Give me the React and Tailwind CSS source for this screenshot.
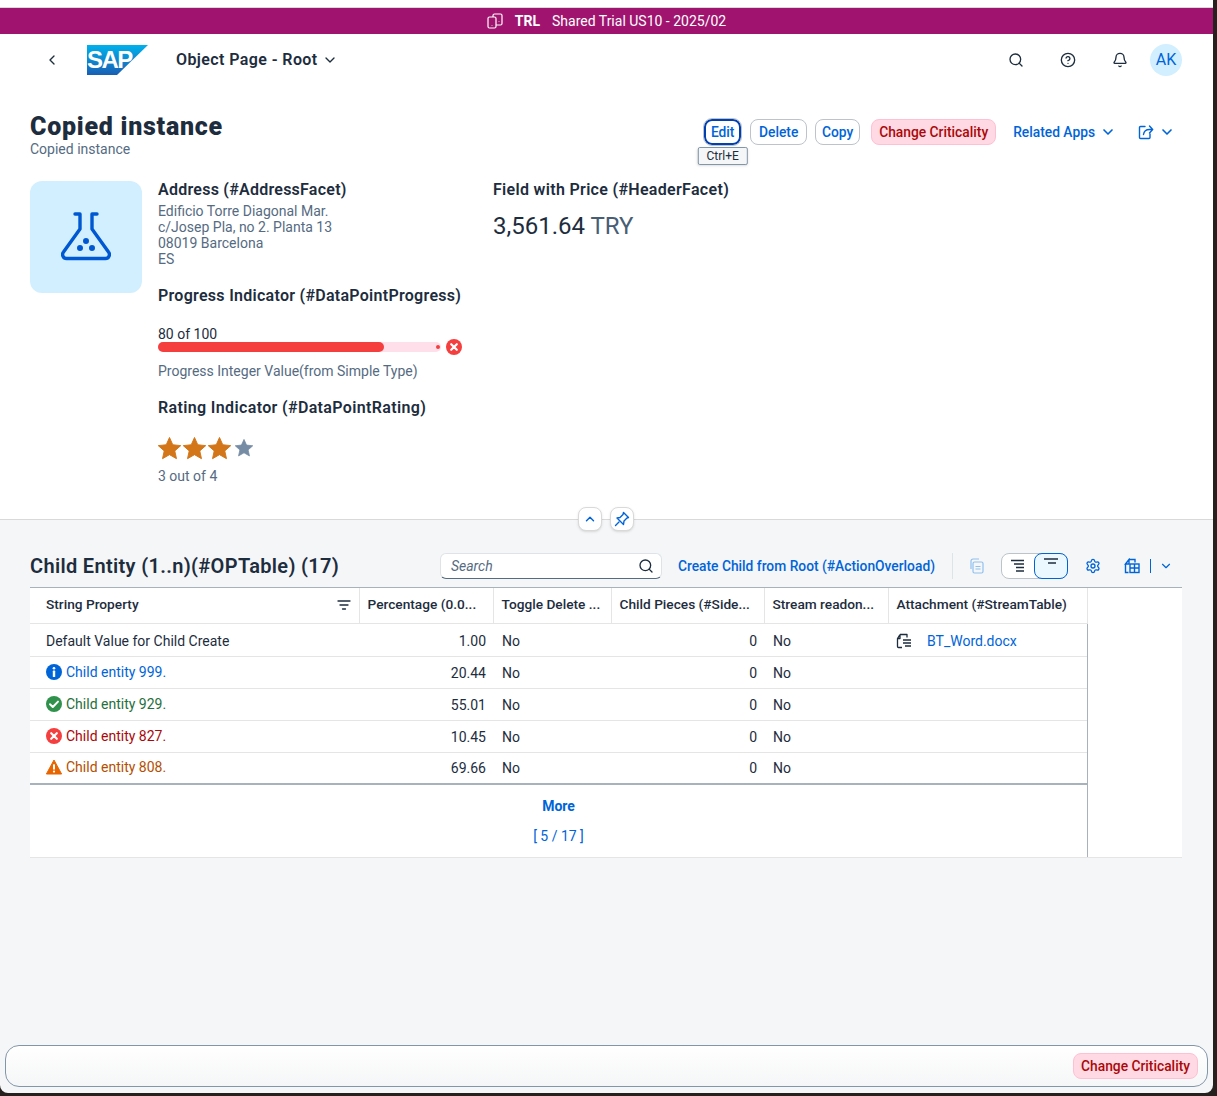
import { ChevronDown, ChevronLeft, ChevronUp, Search, CircleHelp, Bell, Settings } from 'lucide-react'

const columns = [
  { label: 'String Property', width: 'w-[329px]', filter: true },
  { label: 'Percentage (0.0...', width: 'w-[134px]' },
  { label: 'Toggle Delete ...', width: 'w-[118px]' },
  { label: 'Child Pieces (#Side...', width: 'w-[153px]' },
  { label: 'Stream readon...', width: 'w-[124px]' },
  { label: 'Attachment (#StreamTable)', width: 'w-[199px]' }
]

const rows = [
  { name: 'Default Value for Child Create', pct: '1.00', h: 'h-[33px]', color: 'text-[#1d2d3e]', cell: 'pt-[2px]', attachment: true },
  { name: 'Child entity 999.', pct: '20.44', h: 'h-[32px]', color: 'text-[#0064d9]', cell: 'pt-[2px]', status: 'info' },
  { name: 'Child entity 929.', pct: '55.01', h: 'h-[32px]', color: 'text-[#256f3a]', cell: 'pt-[2px]', status: 'success' },
  { name: 'Child entity 827.', pct: '10.45', h: 'h-[32px]', color: 'text-[#aa0808]', cell: 'pt-[2px]', status: 'error' },
  { name: 'Child entity 808.', pct: '69.66', h: 'h-[32px]', color: 'text-[#b44f00]', cell: 'pt-0', status: 'warning' }
]

function StatusIcon({ type, size = 16 }) {
  if (type === 'info') {
    return (
      <svg width={size} height={size} viewBox="0 0 16 16">
        <circle cx="8" cy="8" r="8" fill="#0064d9" />
        <circle cx="8" cy="4.2" r="1.3" fill="#fff" />
        <rect x="6.8" y="6.6" width="2.4" height="6.4" rx="0.6" fill="#fff" />
      </svg>
    )
  }
  if (type === 'success') {
    return (
      <svg width={size} height={size} viewBox="0 0 16 16">
        <circle cx="8" cy="8" r="8" fill="#30914c" />
        <path d="M4 8.3l2.8 2.7L12 5.6" fill="none" stroke="#fff" strokeWidth="2" strokeLinecap="round" strokeLinejoin="round" />
      </svg>
    )
  }
  if (type === 'error') {
    return (
      <svg width={size} height={size} viewBox="0 0 16 16">
        <circle cx="8" cy="8" r="8" fill="#f53e3e" />
        <path d="M5.2 5.2l5.6 5.6M10.8 5.2l-5.6 5.6" fill="none" stroke="#fff" strokeWidth="2.2" strokeLinecap="round" />
      </svg>
    )
  }
  return (
    <svg width={size} height={size} viewBox="0 0 16 16">
      <path d="M8 1L15.6 15H0.4z" fill="#e76500" stroke="#e76500" strokeLinejoin="round" />
      <rect x="7" y="5.2" width="2" height="5.4" rx="0.5" fill="#fff" />
      <circle cx="8" cy="12.6" r="1.1" fill="#fff" />
    </svg>
  )
}

function Star({ size, color, className = '' }) {
  return (
    <svg width={size} height={size} viewBox="0 0 24 24" className={className}>
      <path d="M12 .5l3.400 7.600 8.300.9-6.200 5.500 1.800 8.100-7.300-4.200-7.300 4.200 1.800-8.100L.3 9l8.300-.9z" fill={color} stroke={color} strokeLinejoin="round" />
    </svg>
  )
}

function Button({ children, className = '' }) {
  return (
    <button className={`h-[26px] rounded-lg border border-[#bcc3ca] bg-white text-[#0064d9] text-[13.8px] font-medium ${className}`}>
      {children}
    </button>
  )
}

function ChangeCriticality({ className = '' }) {
  return (
    <button className={`h-[26px] px-[7px] rounded-lg border border-[#ffc0d4] bg-[#ffd9e4] text-[#aa0808] text-[13.8px] font-medium ${className}`}>
      Change Criticality
    </button>
  )
}

function ShareIcon() {
  return (
    <svg width="16" height="16" viewBox="0 0 16 16" fill="none" stroke="#0064d9" strokeWidth="1.4" strokeLinecap="round" strokeLinejoin="round">
      <path d="M7 2.500H2.500a1 1 0 0 0-1 1v10a1 1 0 0 0 1 1h8.500a1 1 0 0 0 1-1V10" />
      <path d="M5.500 10.500c.4-3 2.600-5 6-5h3M11.500 2l3.200 3.500-3.200 3.500" />
    </svg>
  )
}

function PinIcon() {
  return (
    <svg width="16" height="16" viewBox="0 0 16 16" fill="none" stroke="#0064d9" strokeWidth="1.4" strokeLinecap="round" strokeLinejoin="round">
      <path d="M9.500 1.500l5 5-1.500.5-3 3 -.5 3.500-6.500-6.500L6 6.500l3-3z" />
      <path d="M5 11l-3.500 3.500" />
    </svg>
  )
}

function TableHeaderRows() {
  return (
    <thead>
      <tr className="h-[35px] border-b border-[#e5e5e5]">
        {columns.map((col, i) => (
          <th
            key={col.label}
            className={`${col.width} border-r border-[#e5e5e5] text-left text-[13.7px] font-medium text-[#1d2d3e] whitespace-nowrap ${i === 0 ? 'pl-4 pr-2' : 'pl-2 pr-1'} ${i === 5 ? 'border-[#a8b2bd]' : ''}`}
          >
            {col.filter ? (
              <div className="flex items-center justify-between">
                <span>{col.label}</span>
                <svg width="14" height="12" viewBox="0 0 14 12" fill="none" stroke="#1d2d3e" strokeWidth="1.3" strokeLinecap="round">
                  <path d="M1 2h12M3 6h8M5.500 10h3" />
                </svg>
              </div>
            ) : col.label}
          </th>
        ))}
      </tr>
    </thead>
  )
}

export default function App() {
  return (
    <div className="w-[1217px] h-[1096px] bg-[#26211f] overflow-hidden" style={{ fontFamily: 'Roboto, Arial, sans-serif' }}>
      <div className="w-[1213px] h-[1093px] bg-[#f5f6f7] rounded-b-lg flex flex-col overflow-hidden">
        <div className="h-[8px] shrink-0 bg-white border-b border-[#d9d9d9]"></div>

        {/* Trial banner */}
        <div className="h-[26px] shrink-0 bg-[#a0146f] text-white text-sm flex items-center justify-center gap-3">
          <svg width="16" height="16" viewBox="0 0 16 16" fill="none" stroke="#fff" strokeWidth="1.2" strokeLinejoin="round">
            <rect x="1" y="4" width="8" height="11" rx="1.500" />
            <path d="M6 4V2.500A1.500 1.500 0 0 1 7.500 1h6A1.500 1.500 0 0 1 15 2.500v8a1.500 1.500 0 0 1-1.500 1.500H9" />
            <path d="M5 12v.5M12 8v.5" />
          </svg>
          <span className="font-bold">TRL</span>
          <span>Shared Trial US10 - 2025/02</span>
        </div>

        {/* Shell bar */}
        <div className="h-[52px] shrink-0 bg-white flex items-center pl-[44px] pr-[31px]">
          <ChevronLeft size={16} strokeWidth={2} className="text-[#1d2d3e]" />
          <svg width="61" height="30" viewBox="0 0 61 30" className="ml-[27px]">
            <defs>
              <linearGradient id="sapBlue" x1="0" y1="0" x2="0" y2="1">
                <stop offset="0" stopColor="#00b1eb" />
                <stop offset="1" stopColor="#1a5fb4" />
              </linearGradient>
            </defs>
            <polygon points="0,0 61,0 30,30 0,30" fill="url(#sapBlue)" />
            <text x="0" y="23" fontSize="24" fontWeight="700" fill="#fff" fontFamily="Liberation Sans" letterSpacing="-1.500">SAP</text>
          </svg>
          <span className="ml-[28px] text-base font-semibold tracking-[0.4px] text-[#1d2d3e]">Object Page - Root</span>
          <ChevronDown size={16} strokeWidth={2} className="ml-[4px] text-[#1d2d3e]" />
          <div className="ml-auto flex items-center gap-[36px] text-[#1d2d3e]">
            <Search size={16} strokeWidth={2} />
            <CircleHelp size={16} strokeWidth={2} />
            <Bell size={16} strokeWidth={2} />
          </div>
          <div className="ml-[22px] w-[32px] h-[32px] rounded-full bg-[#d1efff] text-[#0064d9] text-base flex items-center justify-center">AK</div>
        </div>

        {/* Object header */}
        <div className="relative h-[434px] shrink-0 bg-white border-b border-[#d9d9d9] pl-[30px] pr-[38px]">
          <div className="flex justify-between pt-[26px]">
            <div>
              <div className="mt-[2px] text-[25px] leading-[26px] font-black tracking-[0.75px] text-[#1d2d3e]">Copied instance</div>
              <div className="text-sm leading-[18px] text-[#556b82]">Copied instance</div>
            </div>
            <div className="flex items-center h-[26px] gap-2 mt-[7px]">
              <div className="relative">
                <button className="h-[26px] w-[37px] rounded-lg border-2 border-[#0040b0] outline outline-1 outline-[#bcc3ca] text-[#0064d9] text-[13.8px] font-medium">Edit</button>
                <div className="absolute left-1/2 -translate-x-1/2 top-[28px] h-[18px] px-2 border border-[#8396a8] rounded-[2px] bg-[#f5f6f7] shadow text-xs leading-[16px] text-[#1d2d3e] whitespace-nowrap">Ctrl+E</div>
              </div>
              <Button className="w-[57px] ml-px">Delete</Button>
              <Button className="w-[45px]">Copy</Button>
              <ChangeCriticality className="ml-[3px]" />
              <div className="ml-[9px] flex items-center gap-[5px] text-[#0064d9] text-[13.8px] font-medium">
                Related Apps
                <ChevronDown size={16} strokeWidth={2.500} />
              </div>
              <div className="ml-[14px] flex items-center gap-[5px] text-[#0064d9]">
                <ShareIcon />
                <ChevronDown size={16} strokeWidth={2.500} />
              </div>
            </div>
          </div>

          <div className="flex mt-[23px]">
            <div className="w-[112px] h-[112px] rounded-xl bg-[#d1efff] flex items-center justify-center shrink-0">
              <svg width="50" height="50" viewBox="0 0 50 50" fill="none" stroke="#0057d2" strokeWidth="3.400" strokeLinecap="round" strokeLinejoin="round">
                <path d="M14 2h5v15L2.500 40a4 4 0 0 0 3 6.500h39a4 4 0 0 0 3-6.500L31 17V2h5" />
                <circle cx="25" cy="29" r="1.300" fill="#0057d2" />
                <circle cx="19" cy="36" r="1.300" fill="#0057d2" />
                <circle cx="31" cy="36" r="1.300" fill="#0057d2" />
              </svg>
            </div>

            <div className="ml-[16px] w-[335px]">
              <div className="text-base leading-[18px] font-semibold tracking-[0.25px] text-[#1d2d3e]">Address (#AddressFacet)</div>
              <div className="mt-[4px] text-sm leading-[16px] text-[#556b82]">
                <div>Edificio Torre Diagonal Mar.</div>
                <div>c/Josep Pla, no 2. Planta 13</div>
                <div>08019 Barcelona</div>
                <div>ES</div>
              </div>
              <div className="mt-[20px] text-base leading-[18px] font-semibold tracking-[0.28px] text-[#1d2d3e]">Progress Indicator (#DataPointProgress)</div>
              <div className="mt-[21px] text-sm leading-[16px] text-[#1d2d3e]">80 of 100</div>
              <div className="flex items-center w-[304px] h-[16px] -mt-[3px]">
                <div className="relative flex-1 h-[10px] bg-[#ffdfe9] rounded-full">
                  <div className="h-full w-[80%] bg-[#f53e3e] rounded-full"></div>
                  <div className="absolute right-[1px] top-[3px] w-[4px] h-[4px] rounded-full bg-[#f53e3e]"></div>
                </div>
                <div className="ml-[5px]"><StatusIcon type="error" /></div>
              </div>
              <div className="mt-[8px] text-sm leading-[16px] text-[#556b82]">Progress Integer Value(from Simple Type)</div>
              <div className="mt-[20px] text-base leading-[18px] font-semibold tracking-[0.36px] text-[#1d2d3e]">Rating Indicator (#DataPointRating)</div>
              <div className="mt-[19px] flex items-center h-[24px] gap-[2px]">
                <Star size={23} color="#d27619" />
                <Star size={23} color="#d27619" />
                <Star size={23} color="#d27619" />
                <Star size={18} color="#758ca4" className="ml-[2px]" />
              </div>
              <div className="mt-[8px] text-sm leading-[16px] text-[#556b82]">3 out of 4</div>
            </div>

            <div>
              <div className="text-base leading-[18px] font-semibold tracking-[0.32px] text-[#1d2d3e]">Field with Price (#HeaderFacet)</div>
              <div className="mt-[12px] text-2xl leading-[30px] text-[#1d2d3e]">3,561.64 <span className="text-[#475e75]">TRY</span></div>
            </div>
          </div>

          <div className="absolute left-[578px] -bottom-[12px] flex gap-[8px]">
            <button className="w-[24px] h-[24px] rounded-lg bg-white border border-[#d9d9d9] shadow flex items-center justify-center text-[#0064d9]">
              <ChevronUp size={14} strokeWidth={2.500} />
            </button>
            <button className="w-[24px] h-[24px] rounded-lg bg-white border border-[#d9d9d9] shadow flex items-center justify-center text-[#0064d9]">
              <PinIcon />
            </button>
          </div>
        </div>

        {/* Table section */}
        <div className="px-[30px] pr-[31px]">
          <div className="h-[67px] flex items-center pt-[25px]">
            <div className="text-xl font-semibold tracking-[0.33px] text-[#1d2d3e] whitespace-nowrap">Child Entity (1..n)(#OPTable) (17)</div>
            <div className="ml-auto flex items-center">
              <div className="w-[222px] h-[26px] rounded-md border border-[#dfe3e7] border-b-[#556b82] bg-white flex items-center justify-between pl-[10px] pr-[7px]">
                <span className="text-sm italic text-[#556b82]">Search</span>
                <Search size={16} strokeWidth={2} className="text-[#1d2d3e]" />
              </div>
              <span className="ml-[16px] text-[13.8px] font-medium text-[#0064d9] whitespace-nowrap">Create Child from Root (#ActionOverload)</span>
              <div className="ml-[17px] w-px h-[26px] bg-[#dfe3e7]"></div>
              <svg width="16" height="16" viewBox="0 0 16 16" fill="none" stroke="#8fc0f0" strokeWidth="1.2" className="ml-[16px]">
                <rect x="4" y="4" width="10" height="11" rx="1.500" />
                <path d="M2 11V3a2 2 0 0 1 2-2h6M6.500 8.500h5M6.500 11h5" />
              </svg>
              <div className="ml-[16px] flex h-[26px] w-[67px] rounded-lg border border-[#bcc3ca] bg-white">
                <div className="flex-1 flex items-center justify-center">
                  <svg width="16" height="14" viewBox="0 0 16 14" fill="none" stroke="#1d2d3e" strokeWidth="1.400">
                    <path d="M1 1.500h13M4 5h10M6 8.500h8M6 12h8" />
                  </svg>
                </div>
                <div className="flex-1 -m-px pb-[6px] flex items-center justify-center rounded-lg border border-[#0064d9] bg-[#ebf8ff]">
                  <svg width="16" height="10" viewBox="0 0 16 10" fill="none" stroke="#1d2d3e" strokeWidth="1.400">
                    <path d="M1 1h14M5 5h8" />
                  </svg>
                </div>
              </div>
              <Settings size={16} strokeWidth={2} className="ml-[17px] text-[#0064d9]" />
              <svg width="16" height="16" viewBox="0 0 16 16" fill="none" stroke="#0064d9" strokeWidth="1.400" className="ml-[23px]">
                <path d="M5 1.500h6v3M1.500 6L5 1.500V6zM1.500 6v8.500h3" />
                <rect x="6" y="6" width="9" height="8.500" />
                <path d="M10.500 6v8.500M6 10h9" />
              </svg>
              <div className="ml-[10px] w-px h-[14px] bg-[#0064d9]"></div>
              <ChevronDown size={14} strokeWidth={2} className="ml-[8px] mr-[9px] text-[#0064d9]" />
            </div>
          </div>

          <div className="bg-white border-t border-[#a8b2bd]">
            <table className="table-fixed border-collapse w-[1057px] text-sm text-[#1d2d3e]">
              <TableHeaderRows />
              <tbody>
                {rows.map((row) => (
                  <tr key={row.name} className={`${row.h} border-b border-[#e5e5e5] last:border-b-2 last:border-[#a8b2bd]`}>
                    <td className={`pl-4 ${row.color} ${row.cell}`}>
                      <div className={`flex items-center gap-[4px] whitespace-nowrap ${row.status ? '-mt-[2px]' : ''}`}>
                        {row.status && <StatusIcon type={row.status} />}
                        {row.name}
                      </div>
                    </td>
                    <td className={`pl-2 pr-[7px] text-right ${row.cell}`}>{row.pct}</td>
                    <td className={`pl-[9px] pr-1 ${row.cell}`}>No</td>
                    <td className={`pl-2 pr-[7px] text-right ${row.cell}`}>0</td>
                    <td className={`pl-[9px] pr-1 ${row.cell}`}>No</td>
                    <td className={`px-2 border-r border-[#a8b2bd] ${row.cell}`}>
                      {row.attachment && (
                        <div className="flex items-center gap-[15px]">
                          <svg width="16" height="16" viewBox="0 0 16 16" fill="none" stroke="#1d2d3e" strokeWidth="1.300" strokeLinejoin="round" className="shrink-0">
                            <path d="M4 1.500h7v3M4 1.500L1.500 5.500v8c0 .6.400 1 1 1H6M4 1.500v4H1.500" />
                            <path d="M7 7h8M7 10h8M9 13h6" />
                          </svg>
                          <span className="text-[#0064d9]">BT_Word.docx</span>
                        </div>
                      )}
                    </td>
                  </tr>
                ))}
              </tbody>
            </table>
            <div className="w-[1058px] h-[72px] border-r border-[#a8b2bd] text-[#0064d9] flex flex-col items-center">
              <div className="mt-[12px] text-sm font-bold leading-[18px]">More</div>
              <div className="mt-[12px] text-sm leading-[18px]">[ 5 / 17 ]</div>
            </div>
            <div className="border-t border-[#e5e5e5]"></div>
          </div>
        </div>

        {/* Footer */}
        <div className="mt-auto mx-[5px] mb-[6px] h-[42px] rounded-[14px] border border-[#8396a8] bg-gradient-to-b from-white to-[#f5f6f7] flex items-center justify-end pr-[9px]">
          <ChangeCriticality />
        </div>
      </div>
    </div>
  )
}
